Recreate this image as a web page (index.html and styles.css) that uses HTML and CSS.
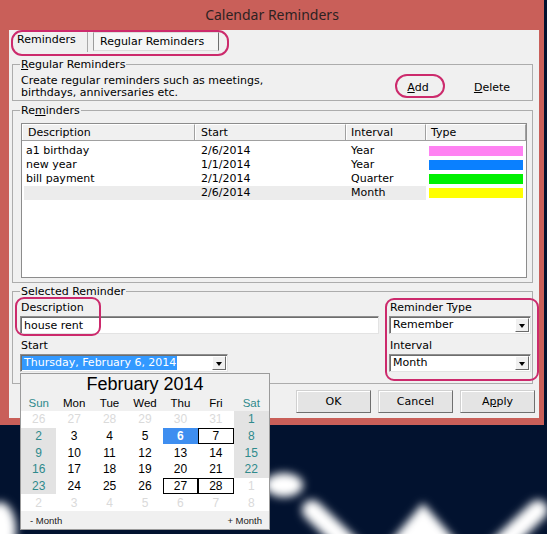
FILE: index.html
```html
<!DOCTYPE html>
<html>
<head>
<meta charset="utf-8">
<title>Calendar Reminders</title>
<link rel="stylesheet" href="styles.css">
</head>
<body>
<div class="desk">
  <svg class="wallpaper" width="547" height="534" viewBox="0 0 547 534">
    <defs>
      <filter id="soft" x="-50%" y="-50%" width="200%" height="200%"><feGaussianBlur stdDeviation="4"/></filter>
    </defs>
    <g filter="url(#soft)" fill="#ffffff" stroke="#ffffff">
      <ellipse cx="284" cy="485" rx="19" ry="12" stroke="none"/>
      <line x1="312" y1="510" x2="352" y2="548" stroke-width="20" stroke-linecap="round"/>
      <polygon points="423,503 385,548 462,548" stroke="none"/>
      <line x1="538" y1="510" x2="498" y2="548" stroke-width="20" stroke-linecap="round"/>
      <ellipse cx="0" cy="530" rx="16" ry="28" stroke="none"/>
    </g>
  </svg>

  <div class="window">
    <div class="titlebar">Calendar Reminders</div>
    <div class="client">
      <div class="tabs">
        <div class="tab tab-active">Reminders</div>
        <div class="tab tab-other">Regular Reminders</div>
      </div>

      <fieldset class="group g1">
        <legend><u>R</u>egular Reminders</legend>
        <div class="g1-body">
          <p class="intro">Create regular reminders such as meetings,<br>birthdays, anniversaries etc.</p>
          <div class="links">
            <button class="flat"><u>A</u>dd</button>
            <button class="flat"><u>D</u>elete</button>
          </div>
        </div>
      </fieldset>

      <fieldset class="group g2">
        <legend>Re<u>m</u>inders</legend>
        <div class="list">
          <div class="lhead">
            <div class="hc hc1">Description</div>
            <div class="hc hc2">Start</div>
            <div class="hc hc3">Interval</div>
            <div class="hc hc4">Type</div>
          </div>
          <div class="rows">
            <div class="row"><div class="rc r1">a1 birthday</div><div class="rc r2">2/6/2014</div><div class="rc r3">Year</div><div class="bar bar-pink"></div></div>
            <div class="row"><div class="rc r1">new year</div><div class="rc r2">1/1/2014</div><div class="rc r3">Year</div><div class="bar bar-blue"></div></div>
            <div class="row"><div class="rc r1">bill payment</div><div class="rc r2">2/1/2014</div><div class="rc r3">Quarter</div><div class="bar bar-green"></div></div>
            <div class="row row-sel"><div class="rc r1"></div><div class="rc r2">2/6/2014</div><div class="rc r3">Month</div><div class="bar bar-yellow"></div></div>
          </div>
        </div>
      </fieldset>

      <fieldset class="group g3">
        <legend>Selected Reminder</legend>
        <div class="g3-body">
          <div class="col-left">
            <div class="flabel">Description</div>
            <div class="textbox">house rent</div>
            <div class="flabel flabel2">Start</div>
            <div class="combo combo-date"><span class="seltext">Thursday, February 6, 2014</span><span class="ddbtn"><span class="tri"></span></span></div>
          </div>
          <div class="col-right">
            <div class="flabel">Reminder Type</div>
            <div class="combo"><span class="ctext">Remember</span><span class="ddbtn"><span class="tri"></span></span></div>
            <div class="flabel flabel2">Interval</div>
            <div class="combo"><span class="ctext">Month</span><span class="ddbtn"><span class="tri"></span></span></div>
          </div>
        </div>
      </fieldset>

      <div class="buttons">
        <button class="btn">OK</button>
        <button class="btn">Cancel</button>
        <button class="btn">A<u>p</u>ply</button>
      </div>
    </div>

    <div class="calendar">
      <div class="cal-title">February 2014</div>
      <div class="cal-dow">
        <span class="we">Sun</span><span>Mon</span><span>Tue</span><span>Wed</span><span>Thu</span><span>Fri</span><span class="we">Sat</span>
      </div>
      <div class="cal-grid">
        <span class="fade">26</span><span class="fade">27</span><span class="fade">28</span><span class="fade">29</span><span class="fade">30</span><span class="fade">31</span><span class="we wbg">1</span>
        <span class="we wbg">2</span><span>3</span><span>4</span><span>5</span><span class="today">6</span><span class="boxed">7</span><span class="we wbg">8</span>
        <span class="we wbg">9</span><span>10</span><span>11</span><span>12</span><span>13</span><span>14</span><span class="we wbg">15</span>
        <span class="we wbg">16</span><span>17</span><span>18</span><span>19</span><span>20</span><span>21</span><span class="we wbg">22</span>
        <span class="we wbg">23</span><span>24</span><span>25</span><span>26</span><span class="boxed">27</span><span class="boxed">28</span><span class="fade">1</span>
        <span class="fade">2</span><span class="fade">3</span><span class="fade">4</span><span class="fade">5</span><span class="fade">6</span><span class="fade">7</span><span class="fade">8</span>
      </div>
      <div class="cal-foot"><span>- Month</span><span>+ Month</span></div>
    </div>

    <div class="mark mark-tabs"></div>
    <div class="mark mark-add"></div>
    <div class="mark mark-desc"></div>
    <div class="mark mark-type"></div>
  </div>
</div>
</body>
</html>
```

FILE: styles.css
```css
* { box-sizing: border-box; }
html, body { margin: 0; padding: 0; }
body {
  width: 547px;
  height: 534px;
  overflow: hidden;
  background: #02122f;
  font-family: "DejaVu Sans", Verdana, sans-serif;
  font-size: 11px;
  color: #000;
}
.desk { position: relative; width: 547px; height: 534px; }
.wallpaper { position: absolute; left: 0; top: 0; }

.window {
  position: relative;
  width: 544px;
  height: 425px;
  background: #c95f59;
  padding: 0 5px 7px 9px;
}
.titlebar {
  height: 30px;
  line-height: 30px;
  margin: 0 -5px 0 -9px;
  text-align: center;
  font-family: "Noto Sans", sans-serif;
  font-size: 14px;
  color: #2e2222;
}
.client {
  height: 388px;
  background: #f0f0f0;
  display: flex;
  flex-direction: column;
}

/* tabs */
.tabs { display: flex; align-items: flex-start; height: 22px; padding-left: 2px; flex-shrink: 0; }
.tab { white-space: nowrap; }
.tab-active {
  width: 77px;
  height: 22px;
  line-height: 20px;
  padding-left: 6px;
  border-right: 1px solid #a9a9a9;
}
.tab-other {
  margin-left: 5px;
  margin-top: 2px;
  width: 126px;
  height: 19px;
  line-height: 17px;
  padding-left: 6px;
  background: #f6f6f6;
  border-left: 1px solid #9c9c9c;
  border-top: 1px solid #dcdcdc;
  border-right: 1px solid #6f6f6f;
  border-bottom: 1px solid #dcdcdc;
}

/* group boxes */
.group {
  padding: 0;
  min-width: 0;
  border: 1px solid #acacac;
  flex-shrink: 0;
}
.group legend {
  padding: 0 1px;
  margin-left: 7px;
  line-height: 13px;
  font-size: 11px;
}
.group.g1 { margin: 6px 6px 0 3px; }
.g1-body { display: flex; align-items: center; padding: 4px 16px 1px 8px; }
.intro { margin: 0; line-height: 12px; }
.links { margin-left: auto; display: flex; gap: 26px; }
.flat {
  width: 48px;
  height: 22px;
  padding: 0;
  border: 0;
  background: transparent;
  font: inherit;
  color: #000;
}

.group.g2 { margin: 3px 6px 0 3px; }
.list {
  margin: 6px 5px 4px 8px;
  height: 155px;
  border: 1px solid #8c8c8c;
  background: #fff;
}
.lhead { display: flex; height: 17px; }
.hc {
  height: 17px;
  line-height: 15px;
  background: #f0f0f0;
  border-top: 1px solid #fff;
  border-bottom: 1px solid #a0a0a0;
  border-right: 1px solid #a0a0a0;
  box-shadow: inset 1px 0 0 #fff;
  white-space: nowrap;
}
.hc1 { width: 173px; padding-left: 6px; }
.hc2 { width: 151px; padding-left: 6px; }
.hc3 { width: 80px; padding-left: 5px; }
.hc4 { width: 100px; padding-left: 5px; }
.rows { padding-top: 3px; }
.row { display: flex; height: 14px; line-height: 14px; padding-left: 2px; }
.rc { height: 14px; white-space: nowrap; }
.r1 { width: 171px; padding-left: 2px; }
.r2 { width: 151px; padding-left: 6px; }
.r3 { width: 80px; padding-left: 5px; }
.row-sel .rc { background: #ececec; }
.bar { width: 94px; height: 10px; margin: 2px 0 0 3px; }
.bar-pink { background: #ff82f2; }
.bar-blue { background: #0a80ff; }
.bar-green { background: #00f000; }
.bar-yellow { background: #ffff00; }

.group.g3 { margin: 2px 6px 0 3px; }
.g3-body { display: flex; justify-content: space-between; padding: 3px 1px 11px 7px; }
.col-right { width: 142px; }
.flabel { line-height: 13px; height: 13px; padding-left: 1px; margin-bottom: 2px; white-space: nowrap; }
.flabel2 { margin-top: 5px; }
.textbox, .combo {
  height: 18px;
  background: #fff;
  border: 1px solid;
  border-color: #8e8e8e #e3e3e3 #e3e3e3 #8e8e8e;
  box-shadow: inset 1px 1px 0 #6d6d6d;
}
.textbox { width: 359px; line-height: 15px; padding-left: 3px; padding-top: 1px; }
.combo { display: flex; align-items: center; padding: 1px 1px 1px 2px; }
.combo-date { width: 208px; padding-left: 1px; }
.ctext { flex: 1; padding-left: 1px; line-height: 14px; }
.seltext {
  background: #3399ff;
  color: #fff;
  line-height: 14px;
  padding: 0 1px 0 2px;
  white-space: nowrap;
}
.ddbtn {
  margin-left: auto;
  width: 14px;
  height: 14px;
  background: #f0f0f0;
  border: 1px solid;
  border-color: #fff #6a6a6a #6a6a6a #fff;
  display: flex;
  align-items: center;
  justify-content: center;
}
.tri {
  width: 0;
  height: 0;
  border-left: 3.5px solid transparent;
  border-right: 3.5px solid transparent;
  border-top: 4px solid #000;
  margin-top: 1px;
}

.buttons { display: flex; justify-content: flex-end; gap: 7px; margin-top: 6px; padding-right: 4px; flex-shrink: 0; }
.btn {
  width: 75px;
  height: 23px;
  padding: 0;
  font: inherit;
  color: #000;
  background: #e4e4e4;
  border: 1px solid;
  border-color: #d0d0d0 #6f6f6f #6f6f6f #d0d0d0;
  box-shadow: inset 1px 1px 0 #fff;
}

/* calendar popup */
.calendar {
  position: absolute;
  left: 20px;
  top: 373px;
  width: 250px;
  height: 157px;
  background: #f0f0f0;
  border: 1px solid #9b9b9b;
  font-family: "Liberation Sans", Arial, sans-serif;
  z-index: 3;
}
.cal-title { height: 21px; line-height: 21px; text-align: center; font-size: 18px; }
.cal-dow { height: 16px; display: grid; grid-template-columns: repeat(7, 1fr); font-size: 11.5px; line-height: 16px; text-align: center; }
.cal-grid {
  height: 100px;
  background: #fff;
  display: grid;
  grid-template-columns: repeat(7, 1fr);
  grid-template-rows: repeat(6, 1fr);
  font-size: 12px;
}
.cal-grid span { display: flex; align-items: center; justify-content: center; }
.we { color: #2f8a8c; }
.wbg { background: #e3e3e3; }
.fade { color: #dadada; }
.today { background: #3e8ef0; color: #fff; font-weight: bold; }
.boxed { box-shadow: inset 0 0 0 1px #000; }
.cal-foot {
  height: 18px;
  display: flex;
  justify-content: space-between;
  align-items: center;
  padding: 0 7px 0 9px;
  font-size: 9.5px;
  color: #222;
}

/* highlight annotations */
.mark {
  position: absolute;
  border: 2px solid #cc2a6c;
  z-index: 4;
}
.mark-tabs { left: 11px; top: 30px; width: 218px; height: 26px; border-radius: 11px; }
.mark-add { left: 395px; top: 74px; width: 50px; height: 24px; border-radius: 12px; }
.mark-desc { left: 15px; top: 297px; width: 86px; height: 39px; border-radius: 9px; }
.mark-type { left: 385px; top: 298px; width: 154px; height: 83px; border-radius: 9px; }
```
